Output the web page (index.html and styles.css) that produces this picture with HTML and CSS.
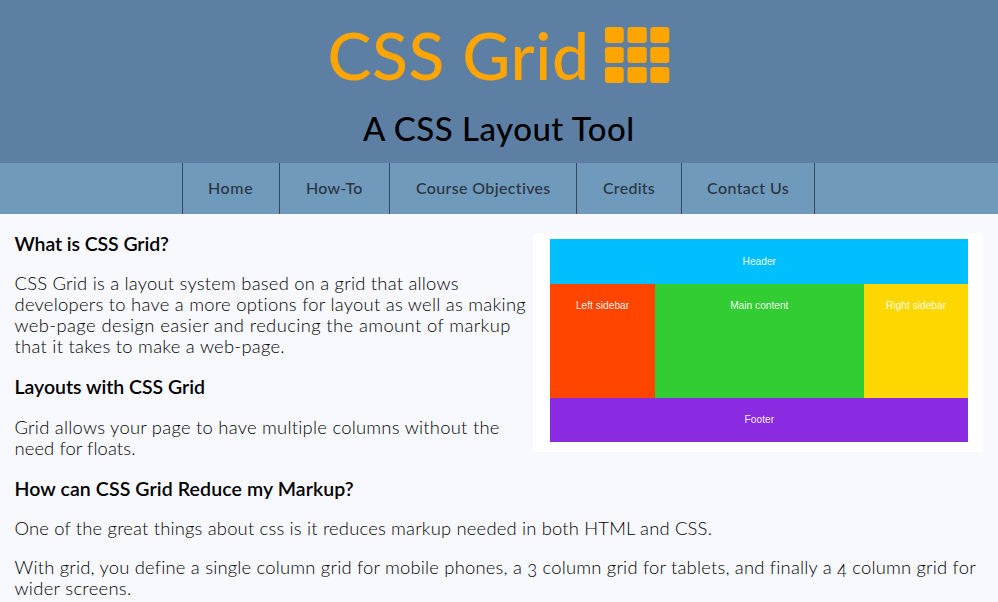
FILE: index.html
```html
<!DOCTYPE html>
<html lang="en">
<head>
<meta charset="utf-8">
<title>CSS Grid</title>
<link rel="stylesheet" href="styles.css">
</head>
<body>
<header class="banner">
  <h1 class="title"><span class="title-text">CSS Grid</span>
    <svg class="grid-icon" width="65" height="56" viewBox="0 0 65 56" fill="currentColor">
      <rect x="0" y="0" width="18.7" height="16" rx="3"/><rect x="22.5" y="0" width="19.3" height="16" rx="3"/><rect x="45.3" y="0" width="19" height="16" rx="3"/>
      <rect x="0" y="20" width="18.7" height="16" rx="3"/><rect x="22.5" y="20" width="19.3" height="16" rx="3"/><rect x="45.3" y="20" width="19" height="16" rx="3"/>
      <rect x="0" y="40" width="18.7" height="16" rx="3"/><rect x="22.5" y="40" width="19.3" height="16" rx="3"/><rect x="45.3" y="40" width="19" height="16" rx="3"/>
    </svg>
  </h1>
  <h2 class="subtitle">A CSS Layout Tool</h2>
</header>
<nav class="menu">
  <a class="item home">Home</a>
  <a class="item howto">How-To</a>
  <a class="item course">Course Objectives</a>
  <a class="item credits">Credits</a>
  <a class="item contact">Contact Us</a>
</nav>
<main class="content">
  <figure class="diagram">
    <div class="cell header">Header</div>
    <div class="cell left">Left sidebar</div>
    <div class="cell main">Main content</div>
    <div class="cell right">Right sidebar</div>
    <div class="cell footer">Footer</div>
  </figure>
  <h3 class="s1">What is CSS Grid?</h3>
  <p><span class="line l1">CSS Grid is a layout system based on a grid that allows</span> <span class="line l2">developers to have a more options for layout as well as making</span> <span class="line l3">web-page design easier and reducing the amount of markup</span> <span class="line l4">that it takes to make a web-page.</span></p>
  <h3 class="s2">Layouts with CSS Grid</h3>
  <p class="after"><span class="line l5">Grid allows your page to have multiple columns without the</span> <span class="line l6">need for floats.</span></p>
  <h3 class="s3">How can CSS Grid Reduce my Markup?</h3>
  <p><span class="line l7">One of the great things about css is it reduces markup needed in both HTML and CSS.</span></p>
  <p><span class="line l8">With grid, you define a single column grid for mobile phones, a <span class="old">3</span> column grid for tablets, and finally a <span class="old">4</span> column grid for</span> <span class="line l9">wider screens.</span></p>
</main>
</body>
</html>
```
FILE: styles.css
```css
* { box-sizing: border-box; }
body { margin: 0; height: 602px; overflow: hidden; background: #f8f9ff; color: #000; font-family: Lato, "Open Sans", sans-serif; }
.banner { height: 163px; background: #5d7fa4; }
.title { margin: 0; height: 108px; padding: 27px 0 0 327.5px; display: flex; color: #ffa500; font-size: 66px; font-weight: 500; line-height: 64px; }
.title-text { width: 277.1px; margin-top: -4px; letter-spacing: .6px; white-space: nowrap; }
.subtitle { margin: 0 0 0 363px; font-size: 33px; line-height: 41px; font-weight: 500; letter-spacing: .5px; white-space: nowrap; }
.menu { height: 51px; padding-right: 1px; background: #6f9abc; display: flex; justify-content: center; }
.item { border-right: 1px solid #34495c; padding-left: 26px; font-size: 16px; line-height: 50px; font-weight: 500; letter-spacing: .35px; color: #2b3440; white-space: nowrap; }
.home { width: 98px; border-left: 1px solid #34495c; padding-left: 25px; letter-spacing: .6px; }
.howto { width: 110px; letter-spacing: .2px; }
.course { width: 187px; }
.credits { width: 105px; letter-spacing: .25px; }
.contact { width: 133px; padding-left: 25px; letter-spacing: .4px; }
.content { padding: 18px 15px 0 14.5px; }
h3 { margin: 0 0 18px; font-size: 19.5px; line-height: 23px; font-weight: 600; white-space: nowrap; }
.s1 { letter-spacing: -.1px; }
.s2 { margin-bottom: 19px; letter-spacing: -.03px; }
.s3 { letter-spacing: .1px; }
p { margin: 0 0 18px; font-size: 18.4px; line-height: 21px; font-weight: 300; }
.line { display: block; white-space: nowrap; }
.l1 { letter-spacing: .22px; }
.l2 { letter-spacing: .26px; }
.l3 { letter-spacing: .39px; }
.l4 { letter-spacing: .26px; }
.l5 { letter-spacing: .25px; }
.l6 { letter-spacing: .1px; }
.l7 { letter-spacing: .18px; }
.l8 { letter-spacing: .2px; }
.l9 { letter-spacing: .3px; }
.old { font-size: 17px; line-height: 0; vertical-align: -3px; }
.diagram { float: right; width: 450px; height: 219px; margin: 1px 0 0; padding: 6.3px 14.7px 10.3px 17.3px; background: #fff; display: grid; grid-template-columns: 1fr 2fr 1fr; grid-template-rows: 44.5px 1fr 44px; color: rgba(255,255,255,.95); font: 10.2px/44px "Liberation Sans", Arial, sans-serif; text-align: center; }
.header { grid-column: 1 / -1; background: #00bfff; line-height: 45px; }
.left { background: #ff4500; }
.main { background: #32cd32; }
.right { background: #ffd700; }
.footer { grid-column: 1 / -1; background: #8a2be2; }
```
